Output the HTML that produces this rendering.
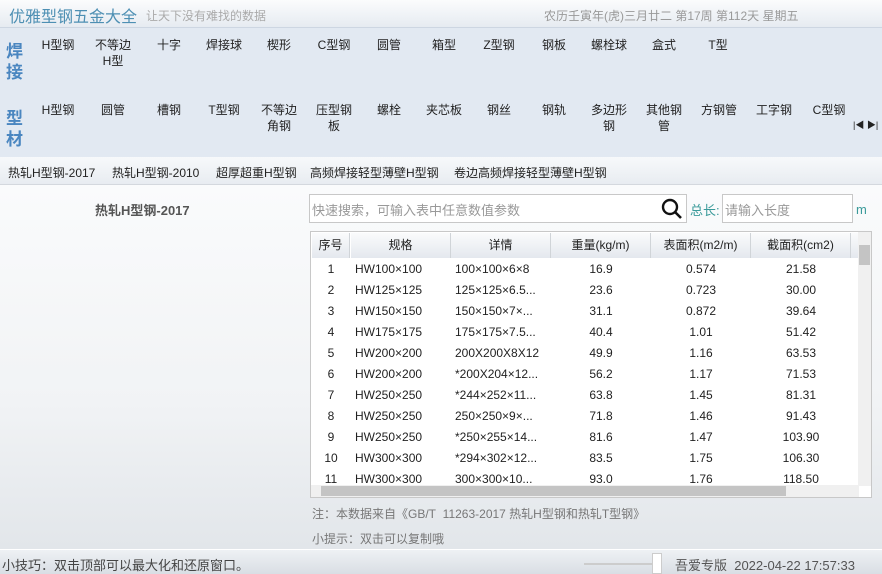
<!DOCTYPE html>
<html><head><meta charset="utf-8"><style>
*{margin:0;padding:0;box-sizing:border-box}
body{width:882px;height:574px;overflow:hidden;font-family:"Liberation Sans","Noto Sans CJK SC",sans-serif;font-size:12px;color:#222;position:relative;background:#eef1f4}
.title{position:absolute;left:0;top:0;width:882px;height:28px;background:linear-gradient(#fbfcfd,#e6ebf1);border-bottom:1px solid #cdd6e2}
.title .a{position:absolute;left:9px;top:3px;font-size:16px;color:#4d8fb3}
.title .b{position:absolute;left:146px;top:7px;font-size:12px;color:#aaa}
.title .c{position:absolute;left:544px;top:7px;font-size:12px;color:#999}
.nav{position:absolute;left:0;top:28px;width:882px;height:129px;background:#e2e9f2}
.cat{position:absolute;left:6px;width:20px;font-size:17px;font-weight:bold;color:#4a86c0;line-height:21px}
.it{position:absolute;width:54px;text-align:center;font-size:12px;line-height:16px;color:#222}
.tabs{position:absolute;left:0;top:157px;width:882px;height:28px;background:linear-gradient(#f7f9fb,#e8ecf1);border-bottom:1px solid #d4d8de}
.tabs span{position:absolute;top:7px;font-size:12px}
.main{position:absolute;left:0;top:185px;width:882px;height:364px;background:linear-gradient(#fafbfc,#f1f3f5 60%,#e2e6ea)}
.h{position:absolute;left:95px;top:15px;font-size:13px;font-weight:bold;color:#555}
.search{position:absolute;left:309px;top:9px;width:378px;height:29px;border:1px solid #c8c8c8;background:#fff;color:#999;font-size:13px;padding:5px 0 0 2px}
.len{position:absolute;left:722px;top:9px;width:131px;height:29px;border:1px solid #c8c8c8;background:#fff;color:#999;font-size:13px;padding:5px 0 0 2px}
.tbl{position:absolute;left:310px;top:231px;width:562px;height:267px;border:1px solid #c8c8c8;background:#fff;overflow:hidden}
.hd{position:absolute;top:1px;height:25px;background:linear-gradient(#fafbfc,#e4e8ee);border-right:1px solid #d0d4d8;text-align:center;line-height:25px;font-size:12px}
.r{position:absolute;left:0;height:21px;width:548px;font-size:12px;line-height:21px}
.r span{position:absolute;top:0}
.vs{position:absolute;right:0;top:0;width:13px;height:254px;background:#f0f0f0}
.hs{position:absolute;left:0;bottom:0;width:548px;height:12px;background:#f0f0f0}
.note{position:absolute;left:312px;font-size:12px;color:#777}
.status{position:absolute;left:0;top:549px;width:882px;height:25px;background:linear-gradient(#eef1f4,#d9dee4);border-top:1px solid #fff}
</style></head><body>
<div class="title"><span class="a">优雅型钢五金大全</span><span class="b">让天下没有难找的数据</span><span class="c">农历壬寅年(虎)三月廿二 第17周 第112天 星期五</span></div>
<div class="nav">
<div class="cat" style="top:13px">焊<br>接</div>
<div class="cat" style="top:80px">型<br>材</div>
<div class="it" style="left:31px;top:9px">H型钢</div>
<div class="it" style="left:86px;top:9px">不等边<br>H型</div>
<div class="it" style="left:142px;top:9px">十字</div>
<div class="it" style="left:197px;top:9px">焊接球</div>
<div class="it" style="left:252px;top:9px">楔形</div>
<div class="it" style="left:307px;top:9px">C型钢</div>
<div class="it" style="left:362px;top:9px">圆管</div>
<div class="it" style="left:417px;top:9px">箱型</div>
<div class="it" style="left:472px;top:9px">Z型钢</div>
<div class="it" style="left:527px;top:9px">钢板</div>
<div class="it" style="left:582px;top:9px">螺栓球</div>
<div class="it" style="left:637px;top:9px">盒式</div>
<div class="it" style="left:691px;top:9px">T型</div>
<div class="it" style="left:31px;top:74px">H型钢</div>
<div class="it" style="left:86px;top:74px">圆管</div>
<div class="it" style="left:142px;top:74px">槽钢</div>
<div class="it" style="left:197px;top:74px">T型钢</div>
<div class="it" style="left:252px;top:74px">不等边<br>角钢</div>
<div class="it" style="left:307px;top:74px">压型钢<br>板</div>
<div class="it" style="left:362px;top:74px">螺栓</div>
<div class="it" style="left:417px;top:74px">夹芯板</div>
<div class="it" style="left:472px;top:74px">钢丝</div>
<div class="it" style="left:527px;top:74px">钢轨</div>
<div class="it" style="left:582px;top:74px">多边形<br>钢</div>
<div class="it" style="left:637px;top:74px">其他钢<br>管</div>
<div class="it" style="left:692px;top:74px">方钢管</div>
<div class="it" style="left:747px;top:74px">工字钢</div>
<div class="it" style="left:802px;top:74px">C型钢</div>
<div style="position:absolute;left:853px;top:91px;font-size:9px;line-height:12px">|◀ ▶|</div>
</div>
<div class="tabs"><span style="left:8px">热轧H型钢-2017</span><span style="left:112px">热轧H型钢-2010</span><span style="left:216px">超厚超重H型钢</span><span style="left:310px">高频焊接轻型薄壁H型钢</span><span style="left:454px">卷边高频焊接轻型薄壁H型钢</span></div>
<div class="main">
<div class="h">热轧H型钢-2017</div>
<div class="search">快速搜索，可输入表中任意数值参数
<svg style="position:absolute;right:2px;top:2px" width="24" height="24" viewBox="0 0 24 24"><circle cx="10" cy="10" r="7" fill="none" stroke="#111" stroke-width="2.4"/><line x1="15" y1="15" x2="21" y2="21" stroke="#111" stroke-width="2.6"/></svg></div>
<div style="position:absolute;left:690px;top:15px;font-size:13px;color:#3a9a9a">总长:</div>
<div class="len">请输入长度</div>
<div style="position:absolute;left:856px;top:17px;font-size:13px;color:#3a9a9a">m</div>
</div>
<div class="tbl">
<div class="hd" style="left:1px;width:38px">序号</div>
<div class="hd" style="left:40px;width:100px">规格</div>
<div class="hd" style="left:140px;width:100px">详情</div>
<div class="hd" style="left:240px;width:100px">重量(kg/m)</div>
<div class="hd" style="left:340px;width:100px">表面积(m2/m)</div>
<div class="hd" style="left:440px;width:100px">截面积(cm2)</div>
<div class="hd" style="left:540px;width:8px"></div>
<div id="rows"></div>
<div class="vs"><div style="position:absolute;left:1px;top:13px;width:11px;height:20px;background:#c4c4c4"></div></div>
<div class="hs"><div style="position:absolute;left:10px;top:1px;width:465px;height:10px;background:#c4c4c4"></div></div>
</div>
<div class="note" style="top:505px">注：本数据来自《GB/T&nbsp; 11263-2017 热轧H型钢和热轧T型钢》</div>
<div class="note" style="top:530px">小提示：双击可以复制哦</div>
<div class="status">
<span style="position:absolute;left:2px;top:5px;font-size:13px;color:#444">小技巧：双击顶部可以最大化和还原窗口。</span>
<div style="position:absolute;left:584px;top:13px;width:70px;height:2px;background:#ccc"></div>
<div style="position:absolute;left:652px;top:3px;width:10px;height:21px;background:#fff;border:1px solid #ccc"></div>
<span style="position:absolute;left:675px;top:5px;font-size:13px;color:#555">吾爱专版&nbsp; 2022-04-22 17:57:33</span>
</div>
<script>
var d=[["1","HW100×100","100×100×6×8","16.9","0.574","21.58"],["2","HW125×125","125×125×6.5...","23.6","0.723","30.00"],["3","HW150×150","150×150×7×...","31.1","0.872","39.64"],["4","HW175×175","175×175×7.5...","40.4","1.01","51.42"],["5","HW200×200","200X200X8X12","49.9","1.16","63.53"],["6","HW200×200","*200X204×12...","56.2","1.17","71.53"],["7","HW250×250","*244×252×11...","63.8","1.45","81.31"],["8","HW250×250","250×250×9×...","71.8","1.46","91.43"],["9","HW250×250","*250×255×14...","81.6","1.47","103.90"],["10","HW300×300","*294×302×12...","83.5","1.75","106.30"],["11","HW300×300","300×300×10...","93.0","1.76","118.50"]];
var h="";d.forEach(function(r,i){h+='<div class="r" style="top:'+(27+i*21)+'px"><span style="left:0;width:40px;text-align:center">'+r[0]+'</span><span style="left:44px">'+r[1]+'</span><span style="left:144px">'+r[2]+'</span><span style="left:240px;width:100px;text-align:center">'+r[3]+'</span><span style="left:340px;width:100px;text-align:center">'+r[4]+'</span><span style="left:440px;width:100px;text-align:center">'+r[5]+'</span></div>'});
document.getElementById("rows").innerHTML=h;
</script>
</body></html>
